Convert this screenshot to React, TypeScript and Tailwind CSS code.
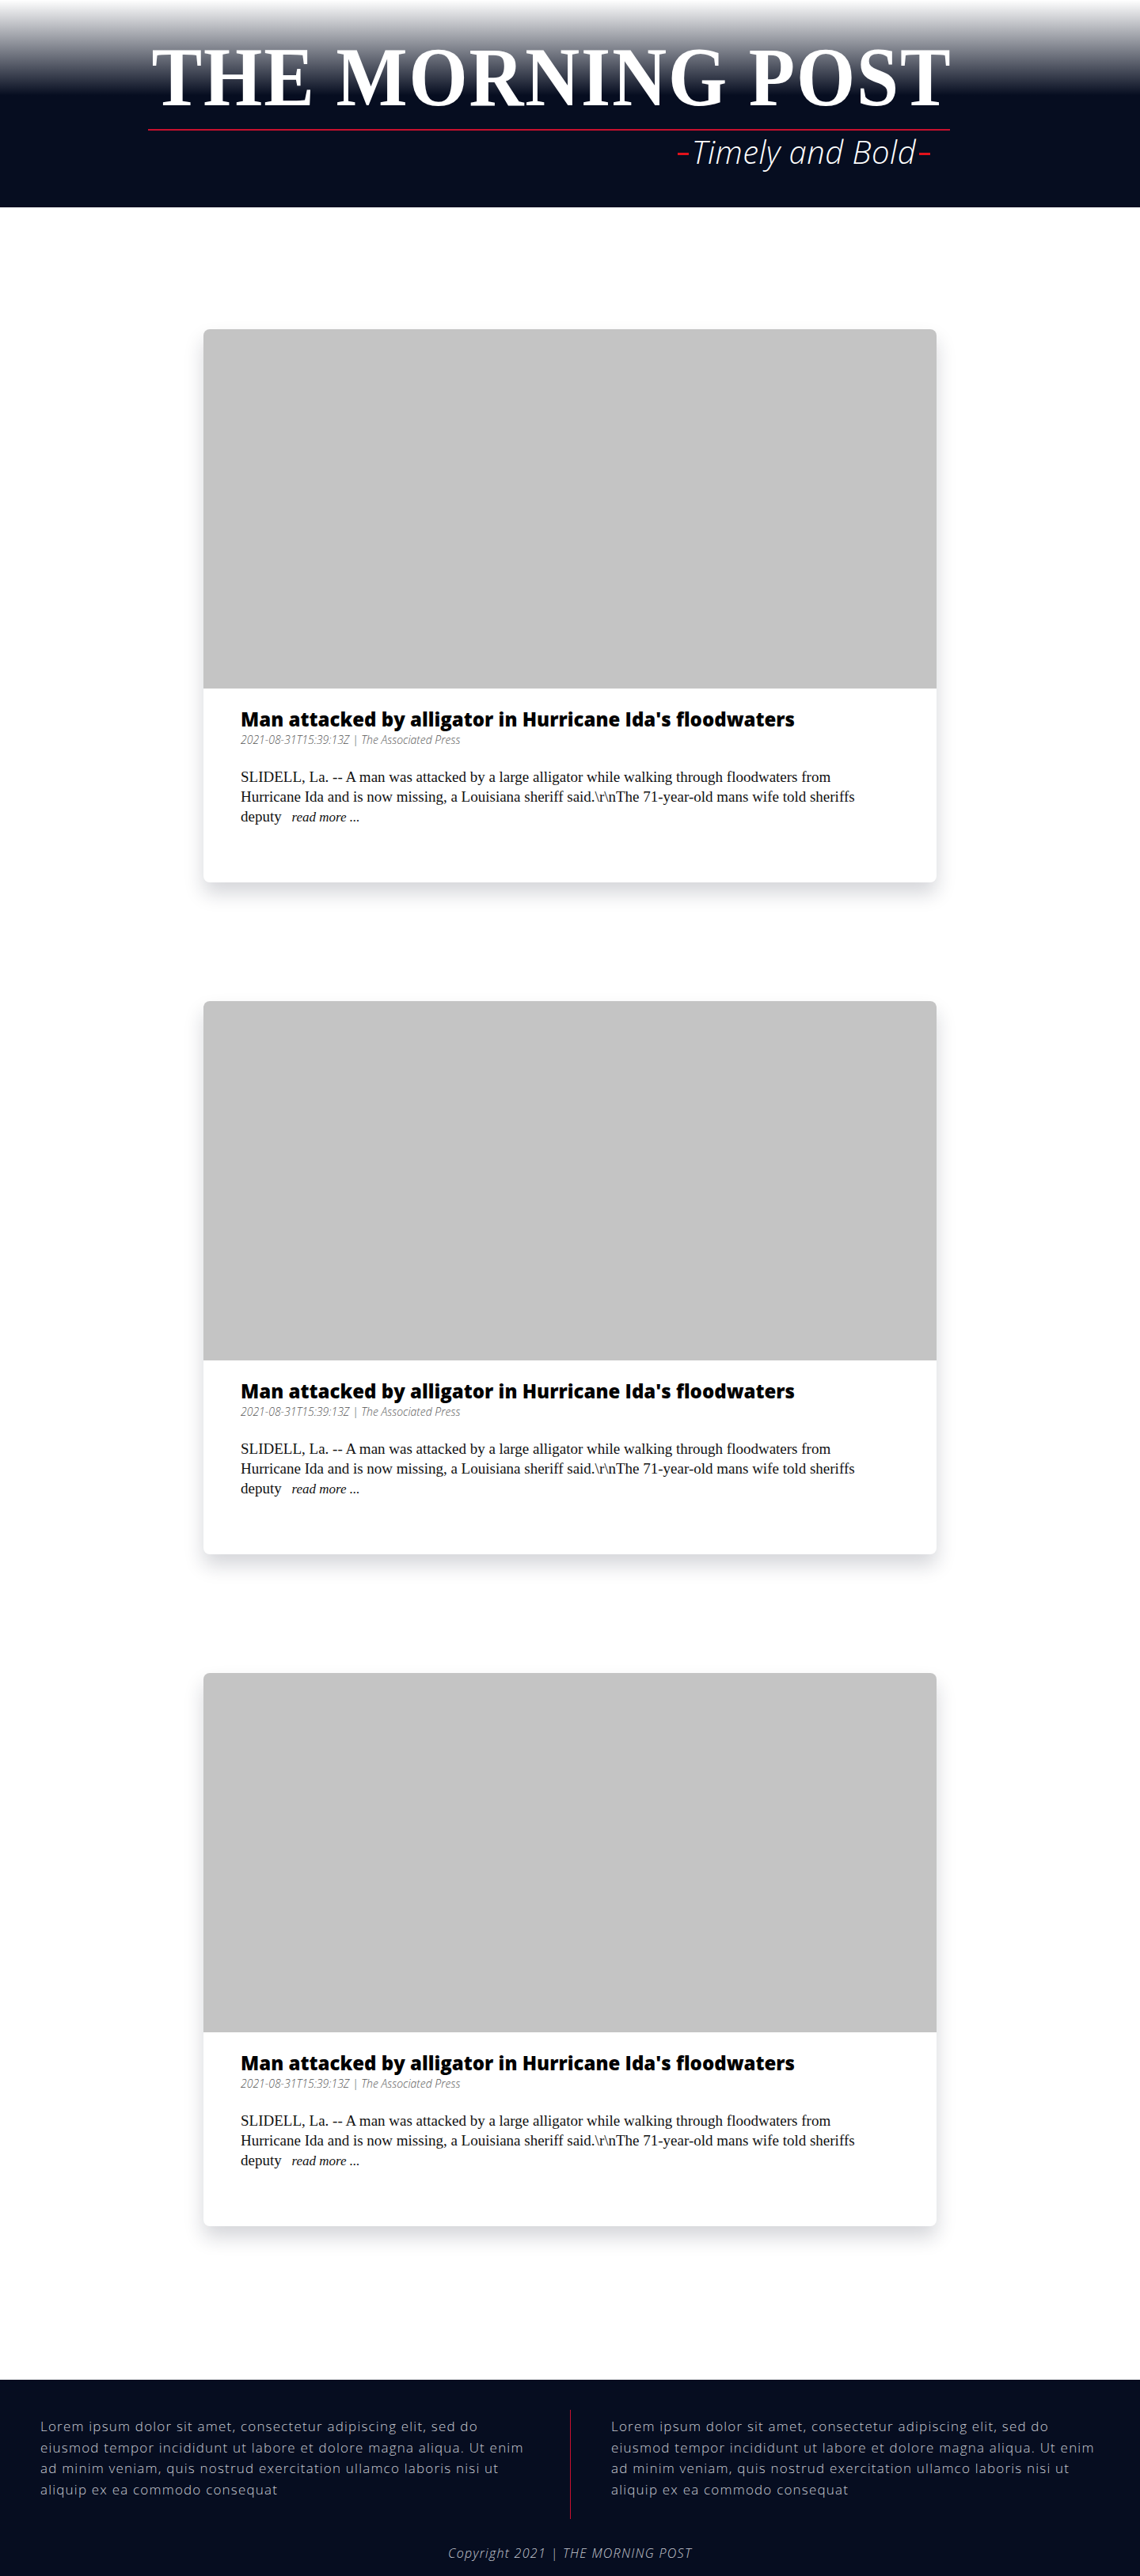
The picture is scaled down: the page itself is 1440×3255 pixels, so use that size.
import React from "react";

const sans = { fontFamily: '"Open Sans", "Noto Sans", sans-serif' };
const serif = { fontFamily: '"Liberation Serif", "DejaVu Serif", serif' };

function Card() {
  return (
    <article className="w-[926px] mx-auto bg-white rounded-lg overflow-hidden shadow-[0_14px_24px_rgba(20,25,50,0.18)]">
      <div className="h-[454px] bg-[#c4c4c4]" />
      <div className="h-[245px] px-[47px] pt-[23px]">
        <h2 style={sans} className="text-[24px] leading-[32px] font-extrabold text-black">
          Man attacked by alligator in Hurricane Ida's floodwaters
        </h2>
        <p style={sans} className="mt-[1px] text-[14px] leading-[18px] italic font-light text-[#555]">
          2021-08-31T15:39:13Z | The Associated Press
        </p>
        <p style={serif} className="mt-[25px] text-[19px] leading-[25px] text-[#111]">
          <span className="block whitespace-nowrap">SLIDELL, La. -- A man was attacked by a large alligator while walking through floodwaters from</span>
          <span className="block whitespace-nowrap">Hurricane Ida and is now missing, a Louisiana sheriff said.\r\nThe 71-year-old mans wife told sheriffs</span>
          <span className="block whitespace-nowrap">
            deputy <span className="ml-[8px] italic text-[17px]">read more ...</span>
          </span>
        </p>
      </div>
    </article>
  );
}

function FooterCol({ border }: { border?: boolean }) {
  return (
    <div className={"px-[51px] pt-[8px] pb-[23px] " + (border ? "border-l border-[#c8102e]" : "")}>
      <p style={sans} className="text-[17px] leading-[26.7px] font-light tracking-[1.2px] text-[#c9ccd4]">
        <span className="block whitespace-nowrap">Lorem ipsum dolor sit amet, consectetur adipiscing elit, sed do</span>
        <span className="block whitespace-nowrap">eiusmod tempor incididunt ut labore et dolore magna aliqua. Ut enim</span>
        <span className="block whitespace-nowrap">ad minim veniam, quis nostrud exercitation ullamco laboris nisi ut</span>
        <span className="block whitespace-nowrap">aliquip ex ea commodo consequat</span>
      </p>
    </div>
  );
}

export default function App() {
  return (
    <div className="min-h-[3255px] bg-white flex flex-col">
      <header className="h-[262px] bg-[linear-gradient(180deg,#ffffff_0%,#060d20_46%)]">
        <div className="ml-[187px] w-[1013px] pt-[38px]">
          <h1
            style={serif}
            className="text-white font-bold text-[106px] leading-[120px] whitespace-nowrap origin-left scale-x-[0.9] pl-[5px] tracking-[0.02em]"
          >
            THE MORNING POST
          </h1>
          <div className="mt-[5px] h-[2px] bg-[#c8102e]" />
          <div className="flex justify-end pr-[25px] mt-[2px]">
            <p style={sans} className="flex items-center text-white italic font-light text-[40px] leading-[50px] tracking-[0.5px]">
              <span className="inline-block w-[14px] h-[3px] bg-[#e0121b] mr-[4px] mt-[4px]" />
              Timely and Bold
              <span className="inline-block w-[14px] h-[3px] bg-[#e0121b] ml-[4px] mt-[4px]" />
            </p>
          </div>
        </div>
      </header>

      <main className="flex flex-col gap-[150px] pt-[154px] pb-[194px]">
        <Card />
        <Card />
        <Card />
      </main>

      <footer className="bg-[#060d20] pt-[38px] h-[248px]">
        <div className="grid grid-cols-2">
          <FooterCol />
          <FooterCol border />
        </div>
        <p style={sans} className="mt-[32px] text-center italic font-light text-[16px] leading-[22px] tracking-[1.3px] text-[#c9ccd4]">
          Copyright 2021 | THE MORNING POST
        </p>
      </footer>
    </div>
  );
}
